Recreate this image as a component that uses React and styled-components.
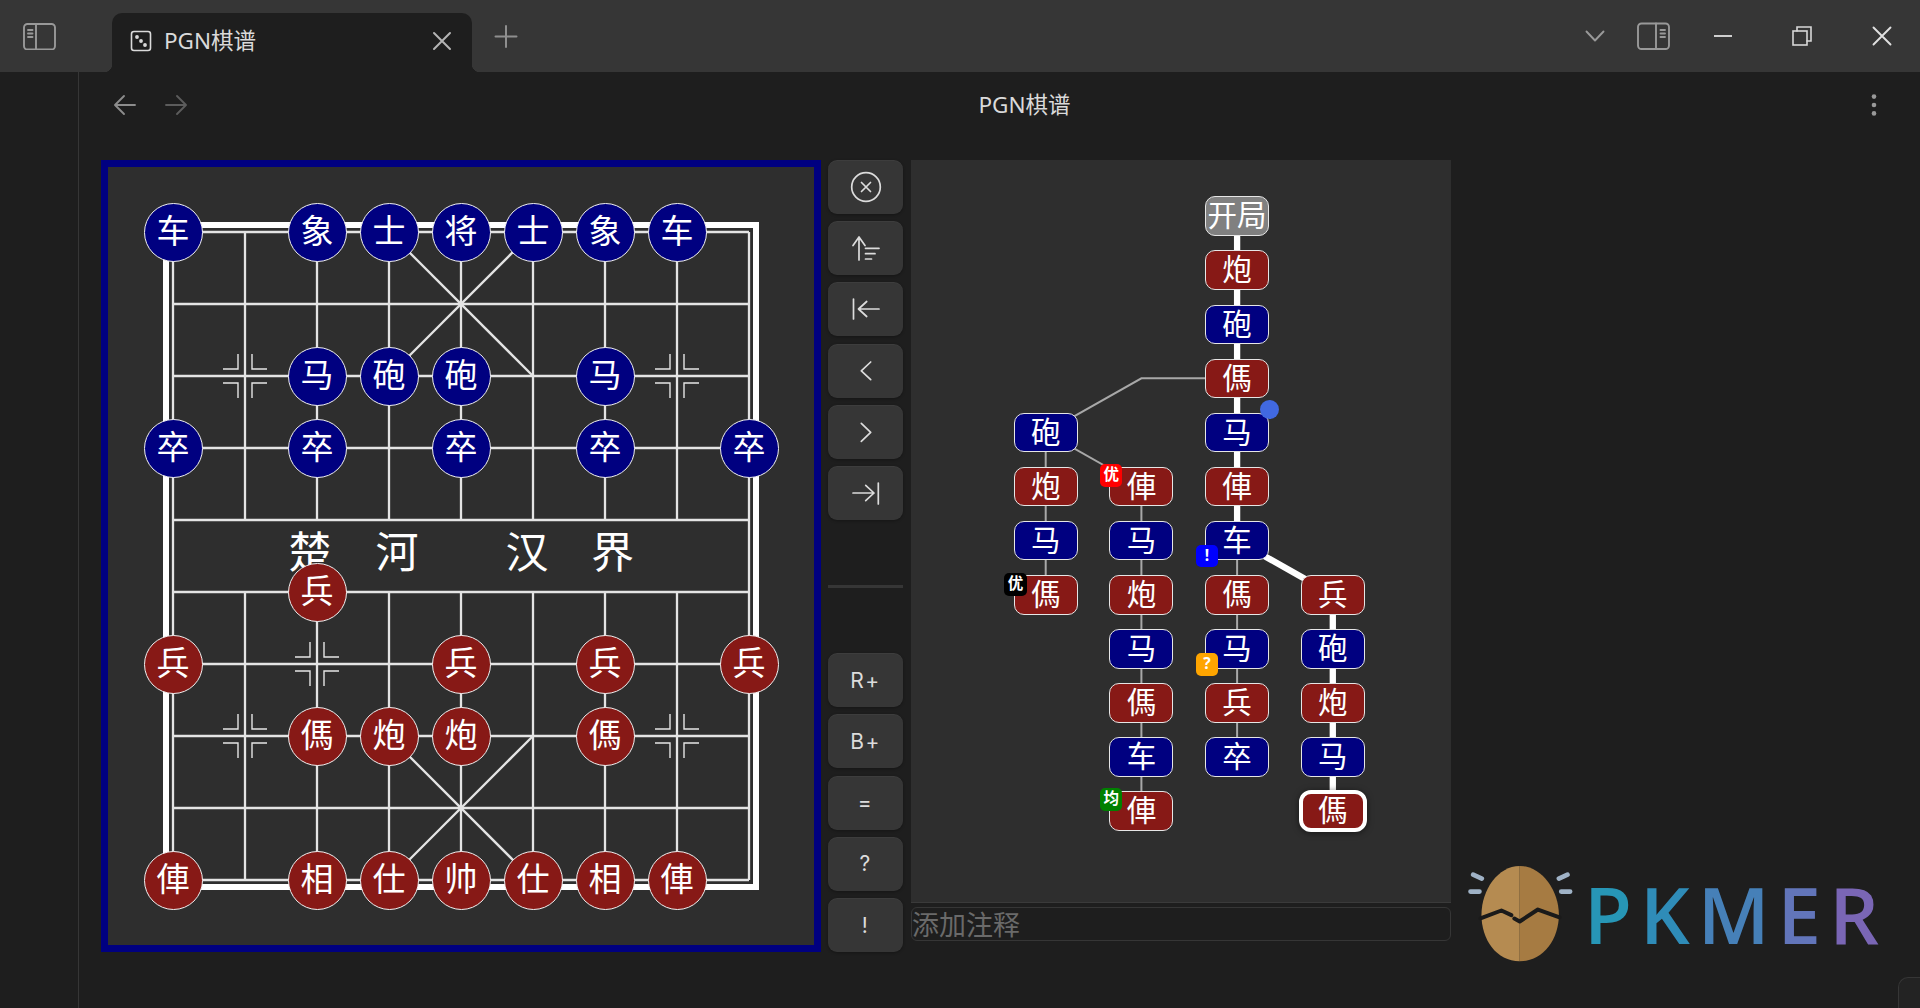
import React from 'react';
import styled, { createGlobalStyle } from 'styled-components';

const CJK = '"Noto Sans", "Noto Sans CJK SC", sans-serif';

const GlobalStyle = createGlobalStyle`
  html, body {
    margin: 0;
    height: 100%;
    background: #1e1e1e;
    overflow: hidden;
  }
  #root {
    height: 100%;
  }
  * {
    box-sizing: border-box;
  }
`;

const Page = styled.div`
  position: relative;
  height: 100%;
  display: flex;
  flex-direction: column;
  font-family: ${CJK};
  color: #dadada;
`;

const TitleBar = styled.div`
  height: 72px;
  flex-shrink: 0;
  background: #363636;
  display: flex;
  align-items: flex-end;
  padding-left: 22px;
`;

const IconBox = styled.div`
  width: ${(p) => p.$w}px;
  height: ${(p) => p.$h || 72}px;
  margin-left: ${(p) => p.$ml || 0}px;
  flex-shrink: 0;
  display: flex;
  align-items: center;
  justify-content: center;
  color: ${(p) => p.$color || '#999'};
`;

const Tab = styled.div`
  position: relative;
  width: 360px;
  height: 59px;
  margin-left: 56px;
  padding: 0 20px 4px 18px;
  background: #1e1e1e;
  border-radius: 10px 10px 0 0;
  display: flex;
  align-items: center;
  gap: 12px;

  &::before,
  &::after {
    content: '';
    position: absolute;
    bottom: 0;
    width: 8px;
    height: 8px;
  }
  &::before {
    left: -8px;
    background: radial-gradient(circle at 0 0, transparent 8px, #1e1e1e 8.5px);
  }
  &::after {
    right: -8px;
    background: radial-gradient(circle at 100% 0, transparent 8px, #1e1e1e 8.5px);
  }
`;

const TabTitle = styled.span`
  flex: 1;
  padding-top: 2px;
  font-size: 22.5px;
  line-height: 1;
  white-space: nowrap;
`;

const Spacer = styled.div`
  flex: 1;
`;

const Workspace = styled.div`
  flex: 1;
  display: flex;
  min-height: 0;
`;

const SideStrip = styled.div`
  width: 79px;
  flex-shrink: 0;
  border-right: 1px solid #363636;
`;

const Main = styled.div`
  flex: 1;
  min-width: 0;
  display: flex;
  flex-direction: column;
`;

const NavBar = styled.div`
  height: 88px;
  flex-shrink: 0;
  display: flex;
  align-items: center;
  padding: 0 32px 22px 33px;
`;

const NavTitle = styled.div`
  flex: 1;
  text-align: center;
  font-size: 22.5px;
  line-height: 1;
`;

const Content = styled.div`
  display: flex;
  padding-left: 22px;
`;

const Board = styled.div`
  position: relative;
  width: 720px;
  height: 792px;
  flex-shrink: 0;
  border: 7px solid #000080;
  background: #2e2e2e;
`;

const BoardLines = styled.svg`
  display: block;
  width: 706px;
  height: 778px;
`;

const RiverText = styled.span`
  position: absolute;
  top: 360px;
  left: ${(p) => p.$x}px;
  width: 50px;
  text-align: center;
  font-size: 43px;
  line-height: 50px;
  color: #fff;
`;

const Piece = styled.div.attrs((p) => ({
  style: { left: p.$x, top: p.$y },
}))`
  position: absolute;
  width: 59px;
  height: 59px;
  border-radius: 50%;
  border: 1.5px solid #f0f0f0;
  background: ${(p) => (p.$red ? '#871916' : '#000080')};
  color: #fff;
  font-size: 33px;
  line-height: 54px;
  text-align: center;
`;

const Controls = styled.div`
  width: 75px;
  height: 792px;
  margin-left: 7px;
  flex-shrink: 0;
  display: flex;
  flex-direction: column;
  justify-content: space-between;
`;

const ButtonGroup = styled.div`
  display: flex;
  flex-direction: column;
  gap: 7.2px;
`;

const Divider = styled.div`
  height: 3px;
  background: #363636;
`;

const ControlButton = styled.button`
  width: 75px;
  height: 54px;
  padding: 0;
  border: none;
  border-radius: 9px;
  background: #363636;
  box-shadow: 0 1px 3px rgba(0, 0, 0, 0.3), inset 0 1px 0 rgba(255, 255, 255, 0.04);
  color: #dcdcdc;
  font-family: Inter, sans-serif;
  font-size: 21px;
  letter-spacing: 1.5px;
  display: flex;
  align-items: center;
  justify-content: center;
`;

const TreeColumn = styled.div`
  width: 540px;
  margin-left: 8px;
  flex-shrink: 0;
  display: flex;
  flex-direction: column;
`;

const TreePanel = styled.div`
  position: relative;
  height: 743px;
  background: #2e2e2e;
  border-bottom: 1px solid #3a3a3a;
`;

const TreeLines = styled.svg`
  display: block;
  width: 540px;
  height: 742px;
`;

const Node = styled.div.attrs((p) => ({
  style: { left: p.$x, top: p.$y },
}))`
  position: absolute;
  width: ${(p) => (p.$active ? 68 : 64)}px;
  height: ${(p) => (p.$active ? 42 : 39.5)}px;
  border-radius: ${(p) => (p.$active ? 12 : 10)}px;
  border: ${(p) => (p.$active ? '4.5px solid #fff' : '1.5px solid #e6e6e6')};
  background: ${(p) => p.$fill};
  color: #fff;
  font-size: 29.5px;
  line-height: ${(p) => (p.$active ? 32 : 36)}px;
  text-align: center;
  white-space: nowrap;
  ${(p) => p.$active && 'box-shadow: 0 1px 6px rgba(0, 0, 0, 0.5);'}
`;

const Badge = styled.span`
  position: absolute;
  left: -10.5px;
  top: ${(p) => p.$top}px;
  width: 22.5px;
  height: 22.5px;
  border-radius: 5px;
  background: ${(p) => p.$color};
  color: #fff;
  font-size: 15.5px;
  font-weight: 700;
  line-height: 20px;
  text-align: center;
`;

const Dot = styled.span`
  position: absolute;
  right: -11px;
  top: -13.5px;
  width: 19px;
  height: 19px;
  border-radius: 50%;
  background: #4169e1;
`;

const CommentInput = styled.input`
  width: 540px;
  height: 34px;
  margin-top: 4px;
  padding: 0;
  background: #1e1e1e;
  border: 1px solid #363636;
  border-radius: 6px;
  color: #dadada;
  font-family: ${CJK};
  font-size: 27px;
  outline: none;

  &::placeholder {
    color: #6a6a6a;
    opacity: 1;
  }
`;

const Watermark = styled.div`
  position: absolute;
  left: 1468px;
  top: 865px;
  display: flex;
  align-items: flex-start;
  filter: blur(0.6px);
`;

const EggLogo = styled.svg`
  width: 105px;
  height: 98px;
  flex-shrink: 0;
`;

const Wordmark = styled.div`
  margin: 10px 0 0 11px;
  display: flex;
  gap: 8px;
  font-family: "Open Sans", sans-serif;
  font-weight: 600;
  font-size: 78px;
  line-height: 78px;
`;

const WordLetter = styled.span`
  color: ${(p) => p.$color};
`;

const CornerTab = styled.div`
  position: absolute;
  right: 0;
  bottom: 0;
  width: 22px;
  height: 31px;
  background: #232323;
  border: 1px solid #363636;
  border-width: 1px 0 0 1px;
  border-top-left-radius: 10px;
`;

const COL = (i) => 65 + 72 * i;
const ROW = (i) => 65 + 72 * i;

const bluePieces = [
  [0, 0, '车'], [2, 0, '象'], [3, 0, '士'], [4, 0, '将'], [5, 0, '士'], [6, 0, '象'], [7, 0, '车'],
  [2, 2, '马'], [3, 2, '砲'], [4, 2, '砲'], [6, 2, '马'],
  [0, 3, '卒'], [2, 3, '卒'], [4, 3, '卒'], [6, 3, '卒'], [8, 3, '卒'],
];

const redPieces = [
  [2, 5, '兵'],
  [0, 6, '兵'], [4, 6, '兵'], [6, 6, '兵'], [8, 6, '兵'],
  [2, 7, '傌'], [3, 7, '炮'], [4, 7, '炮'], [6, 7, '傌'],
  [0, 9, '俥'], [2, 9, '相'], [3, 9, '仕'], [4, 9, '帅'], [5, 9, '仕'], [6, 9, '相'], [7, 9, '俥'],
];

const markers = [
  [1, 2], [7, 2], [2, 3], [4, 3], [6, 3],
  [2, 6], [4, 6], [6, 6], [1, 7], [7, 7],
];

const RED = '#871916';
const BLUE = '#000080';

// col, row, text, fill
const treeNodes = [
  { c: 2, r: 0, t: '开局', f: '#808080' },
  { c: 2, r: 1, t: '炮', f: RED },
  { c: 2, r: 2, t: '砲', f: BLUE },
  { c: 2, r: 3, t: '傌', f: RED },
  { c: 2, r: 4, t: '马', f: BLUE, dot: true },
  { c: 2, r: 5, t: '俥', f: RED },
  { c: 2, r: 6, t: '车', f: BLUE, badge: ['!', '#0000ff', 23] },
  { c: 2, r: 7, t: '傌', f: RED },
  { c: 2, r: 8, t: '马', f: BLUE, badge: ['?', '#ffa500', 23] },
  { c: 2, r: 9, t: '兵', f: RED },
  { c: 2, r: 10, t: '卒', f: BLUE },
  { c: 0, r: 4, t: '砲', f: BLUE },
  { c: 0, r: 5, t: '炮', f: RED },
  { c: 0, r: 6, t: '马', f: BLUE },
  { c: 0, r: 7, t: '傌', f: RED, badge: ['优', '#000', -3] },
  { c: 1, r: 5, t: '俥', f: RED, badge: ['优', '#ff0000', -3.5] },
  { c: 1, r: 6, t: '马', f: BLUE },
  { c: 1, r: 7, t: '炮', f: RED },
  { c: 1, r: 8, t: '马', f: BLUE },
  { c: 1, r: 9, t: '傌', f: RED },
  { c: 1, r: 10, t: '车', f: BLUE },
  { c: 1, r: 11, t: '俥', f: RED, badge: ['均', '#008000', -4] },
  { c: 3, r: 7, t: '兵', f: RED },
  { c: 3, r: 8, t: '砲', f: BLUE },
  { c: 3, r: 9, t: '炮', f: RED },
  { c: 3, r: 10, t: '马', f: BLUE },
  { c: 3, r: 11, t: '傌', f: RED, active: true },
];

const nodeX = (c) => 134.7 + 95.7 * c;
const nodeY = (r) => 56 + 54.1 * r;

const point = (c, r) => `${nodeX(c)},${nodeY(r)}`;

const thinPaths = [
  [point(2, 3), point(1, 3), point(0, 4)],
  [point(0, 4), point(1, 5)],
  [point(0, 4), point(0, 7)],
  [point(1, 5), point(1, 11)],
  [point(2, 6), point(2, 10)],
];

const thickPath = [point(2, 0), point(2, 6), point(3, 7), point(3, 11)];

const wordLetters = [
  ['P', '#2796b6'],
  ['K', '#2f8cb8'],
  ['M', '#4680b8'],
  ['E', '#6275ba'],
  ['R', '#7a66b5'],
];

function Marker({ col, row }) {
  const x = COL(col);
  const y = ROW(row);
  const corners = [[-1, -1], [1, -1], [-1, 1], [1, 1]];
  return corners.map(([sx, sy]) => (
    <polyline
      key={`${sx}${sy}`}
      points={`${x + sx * 22},${y + sy * 7} ${x + sx * 7},${y + sy * 7} ${x + sx * 7},${y + sy * 22}`}
      fill="none"
      stroke="#e6e6e6"
      strokeWidth="1.4"
    />
  ));
}

function BoardGrid() {
  const rows = Array.from({ length: 10 }, (_, i) => ROW(i));
  const cols = Array.from({ length: 9 }, (_, i) => COL(i));
  return (
    <BoardLines viewBox="0 0 706 778">
      <rect x={COL(0) - 7} y={ROW(0) - 7} width={590} height={662} fill="none" stroke="#fff" strokeWidth="6" />
      <g stroke="#e4e4e4" strokeWidth="2.3" fill="none">
        {rows.map((y) => (
          <line key={y} x1={COL(0)} x2={COL(8)} y1={y} y2={y} />
        ))}
        {cols.map((x, i) =>
          i === 0 || i === 8 ? (
            <line key={x} x1={x} x2={x} y1={ROW(0)} y2={ROW(9)} />
          ) : (
            <g key={x}>
              <line x1={x} x2={x} y1={ROW(0)} y2={ROW(4)} />
              <line x1={x} x2={x} y1={ROW(5)} y2={ROW(9)} />
            </g>
          )
        )}
        <line x1={COL(3)} y1={ROW(0)} x2={COL(5)} y2={ROW(2)} />
        <line x1={COL(5)} y1={ROW(0)} x2={COL(3)} y2={ROW(2)} />
        <line x1={COL(3)} y1={ROW(7)} x2={COL(5)} y2={ROW(9)} />
        <line x1={COL(5)} y1={ROW(7)} x2={COL(3)} y2={ROW(9)} />
      </g>
      {markers.map(([c, r]) => (
        <Marker key={`${c}-${r}`} col={c} row={r} />
      ))}
    </BoardLines>
  );
}

const SvgIcon = ({ w = 36, h = 36, sw = 1.7, children }) => (
  <svg width={w} height={h} viewBox={`0 0 ${w} ${h}`} fill="none" stroke="currentColor" strokeWidth={sw} strokeLinecap="round" strokeLinejoin="round">
    {children}
  </svg>
);

const controlIcons = [
  <SvgIcon key="close">
    <circle cx="18" cy="18" r="14.3" />
    <path d="M13.5 13.5l9 9M22.5 13.5l-9 9" />
  </SvgIcon>,
  <SvgIcon key="sort">
    <path d="M11 30V7M5 15.5L11 7l6 8.5M17.5 18.3H31M17.5 23.7H27M17.5 29H23.5" />
  </SvgIcon>,
  <SvgIcon key="first">
    <path d="M5.5 8v20M31 18H10.5M18.7 10.5L10.5 18l8.2 7.5" />
  </SvgIcon>,
  <SvgIcon key="prev">
    <path d="M22.7 9l-9.4 8.8 9.4 8.9" />
  </SvgIcon>,
  <SvgIcon key="next">
    <path d="M13.3 9.3l9.4 9-9.4 9" />
  </SvgIcon>,
  <SvgIcon key="last">
    <path d="M30.3 8v21M5 18h21M17.7 10.3L26 18l-8.3 7.7" />
  </SvgIcon>,
];

export default function App() {
  return (
    <Page>
      <GlobalStyle />
      <TitleBar>
        <IconBox $w={34}>
          <SvgIcon w={34} h={28} sw={1.9}>
            <rect x="2" y="2" width="31" height="25.5" rx="3.5" />
            <path d="M14 2v25.5M6 8h4.5M6 11.5h4.5M6 15h4.5" />
          </SvgIcon>
        </IconBox>
        <Tab>
          <SvgIcon w={22} h={22} sw={1.6}>
            <rect x="1.5" y="1.5" width="19" height="19" rx="2.5" />
            <circle cx="7" cy="7" r="1.1" fill="currentColor" />
            <circle cx="11" cy="11" r="1.1" fill="currentColor" />
            <circle cx="15" cy="15" r="1.1" fill="currentColor" />
          </SvgIcon>
          <TabTitle>PGN棋谱</TabTitle>
          <IconBox $w={20} $h={20} $color="#b4b4b4">
            <SvgIcon w={20} h={20} sw={2}>
              <path d="M2 2l16 16M18 2L2 18" />
            </SvgIcon>
          </IconBox>
        </Tab>
        <IconBox $w={24} $ml={22} $color="#8f8f8f">
          <SvgIcon w={24} h={24} sw={2}>
            <path d="M12 2v21M1.5 12.5h21" />
          </SvgIcon>
        </IconBox>
        <Spacer />
        <IconBox $w={20}>
          <SvgIcon w={20} h={12} sw={1.9}>
            <path d="M1.5 1.5l8.5 9 8.5-9" />
          </SvgIcon>
        </IconBox>
        <IconBox $w={34} $ml={32}>
          <SvgIcon w={34} h={28} sw={1.9}>
            <rect x="1" y="1.5" width="31" height="25.5" rx="3.5" />
            <path d="M19 1.5V27M23.5 8H28M23.5 11.5H28M23.5 15H28" />
          </SvgIcon>
        </IconBox>
        <IconBox $w={20} $ml={42} $color="#cfcfcf">
          <SvgIcon w={20} h={20} sw={2}>
            <path d="M1 10h18" strokeLinecap="butt" />
          </SvgIcon>
        </IconBox>
        <IconBox $w={20} $ml={59} $color="#d8d8d8">
          <SvgIcon w={20} h={20} sw={1.6}>
            <rect x="1" y="5" width="14" height="14" strokeLinejoin="miter" />
            <path d="M5 5V1h14v14h-4" strokeLinejoin="miter" />
          </SvgIcon>
        </IconBox>
        <IconBox $w={20} $ml={60} $color="#e0e0e0">
          <SvgIcon w={20} h={20} sw={1.9}>
            <path d="M1.5 1.5l17 17M18.5 1.5l-17 17" />
          </SvgIcon>
        </IconBox>
        <IconBox $w={28} />
      </TitleBar>
      <Workspace>
        <SideStrip />
        <Main>
          <NavBar>
            <IconBox $w={26} $h={24} $color="#8c8c8c">
              <SvgIcon w={24} h={22} sw={1.9}>
                <path d="M22 11H3M11 2l-9 9 9 9" />
              </SvgIcon>
            </IconBox>
            <IconBox $w={26} $h={24} $ml={25} $color="#5c5c5c">
              <SvgIcon w={24} h={22} sw={1.9}>
                <path d="M2 11h19M13 2l9 9-9 9" />
              </SvgIcon>
            </IconBox>
            <NavTitle>PGN棋谱</NavTitle>
            <IconBox $w={28} $h={24}>
              <svg width="6" height="22" viewBox="0 0 6 22" fill="currentColor">
                <circle cx="3" cy="2.6" r="2.3" />
                <circle cx="3" cy="11" r="2.3" />
                <circle cx="3" cy="19.4" r="2.3" />
              </svg>
            </IconBox>
          </NavBar>
          <Content>
            <Board>
              <BoardGrid />
              <RiverText $x={177}>楚</RiverText>
              <RiverText $x={264}>河</RiverText>
              <RiverText $x={394}>汉</RiverText>
              <RiverText $x={479.5}>界</RiverText>
              {bluePieces.map(([c, r, t]) => (
                <Piece key={`b${c}-${r}`} $x={COL(c) - 29.5} $y={ROW(r) - 29.5}>
                  {t}
                </Piece>
              ))}
              {redPieces.map(([c, r, t]) => (
                <Piece key={`r${c}-${r}`} $red $x={COL(c) - 29.5} $y={ROW(r) - 29.5}>
                  {t}
                </Piece>
              ))}
            </Board>
            <Controls>
              <ButtonGroup>
                {controlIcons.map((icon, i) => (
                  <ControlButton key={i}>{icon}</ControlButton>
                ))}
              </ButtonGroup>
              <Divider />
              <ButtonGroup>
                {['R+', 'B+', '=', '?', '!'].map((label) => (
                  <ControlButton key={label}>{label}</ControlButton>
                ))}
              </ButtonGroup>
            </Controls>
            <TreeColumn>
              <TreePanel>
                <TreeLines viewBox="0 0 540 742">
                  <g fill="none" stroke="#a8a8a8" strokeWidth="2">
                    {thinPaths.map((pts) => (
                      <polyline key={pts.join()} points={pts.join(' ')} />
                    ))}
                  </g>
                  <polyline points={thickPath.join(' ')} fill="none" stroke="#fff" strokeWidth="6.3" />
                </TreeLines>
                {treeNodes.map((n) => (
                  <Node
                    key={`${n.c}-${n.r}`}
                    $x={nodeX(n.c) - (n.active ? 34 : 32)}
                    $y={nodeY(n.r) - (n.active ? 21 : 19.7)}
                    $fill={n.f}
                    $active={n.active}
                  >
                    {n.t}
                    {n.badge && (
                      <Badge $color={n.badge[1]} $top={n.badge[2]}>
                        {n.badge[0]}
                      </Badge>
                    )}
                    {n.dot && <Dot />}
                  </Node>
                ))}
              </TreePanel>
              <CommentInput placeholder="添加注释" readOnly />
            </TreeColumn>
          </Content>
        </Main>
      </Workspace>
      <Watermark>
        <EggLogo viewBox="85 75 315 295">
          <path d="M240 78C175 78 125 150 125 225c0 75 45 140 115 140z" fill="#b58b51" />
          <path d="M240 78c65 0 118 72 118 147 0 75-48 140-118 140z" fill="#a67b42" />
          <path
            d="M122 236L185 212l30 14M224 236l16 9 55-36 65 24"
            fill="none"
            stroke="#1a1a1a"
            strokeWidth="12"
            strokeLinejoin="round"
            strokeLinecap="round"
          />
          <path
            d="M100 104l26 12M92 155h27M358 116l26-12M365 155h27"
            fill="none"
            stroke="#9fb2c6"
            strokeWidth="14"
            strokeLinecap="round"
          />
        </EggLogo>
        <Wordmark>
          {wordLetters.map(([l, color]) => (
            <WordLetter key={l} $color={color}>
              {l}
            </WordLetter>
          ))}
        </Wordmark>
      </Watermark>
      <CornerTab />
    </Page>
  );
}
